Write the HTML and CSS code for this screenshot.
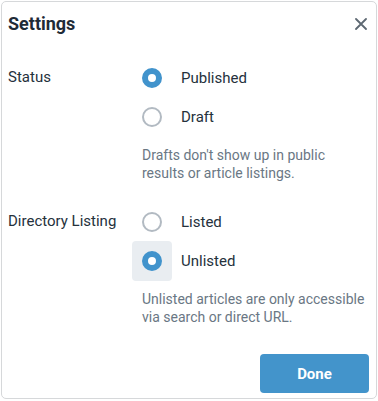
FILE: index.html
```html
<!DOCTYPE html>
<html lang="en">
<head>
  <meta charset="UTF-8" />
  <title>Settings</title>
  <link rel="stylesheet" href="styles.css">
</head>
<body>
  <div class="dialog">
    <div class="header">
      <div class="title">Settings</div>
      <button class="close" aria-label="Close">
        <svg width="12" height="12" viewBox="0 0 12 12">
          <path d="M1 1 L11 11 M11 1 L1 11" stroke="#5d6872" stroke-width="1.8" stroke-linecap="round" fill="none"/>
        </svg>
      </button>
    </div>

    <div class="field">
      <div class="field-label">Status</div>
      <div class="options">
        <label class="option">
          <span class="radio-box"><span class="radio checked"></span></span>
          <span class="option-text">Published</span>
        </label>
        <label class="option">
          <span class="radio-box"><span class="radio"></span></span>
          <span class="option-text">Draft</span>
        </label>
        <p class="help">Drafts don't show up in public results or article listings.</p>
      </div>
    </div>

    <div class="field">
      <div class="field-label">Directory Listing</div>
      <div class="options">
        <label class="option">
          <span class="radio-box"><span class="radio"></span></span>
          <span class="option-text">Listed</span>
        </label>
        <label class="option">
          <span class="radio-box focused"><span class="radio checked"></span></span>
          <span class="option-text">Unlisted</span>
        </label>
        <p class="help">Unlisted articles are only accessible via search or direct URL.</p>
      </div>
    </div>

    <div class="footer">
      <button class="done-btn">Done</button>
    </div>
  </div>
</body>
</html>
```

FILE: styles.css
```css
* {
  box-sizing: border-box;
}

body {
  margin: 0;
  padding: 1px;
  font-family: Roboto, 'Liberation Sans', sans-serif;
  background: #ffffff;
}

.dialog {
  width: 376px;
  height: 398px;
  border: 1px solid #d6d8da;
  border-radius: 5px;
  padding: 0 7px 0 6px;
  background: #fff;
}

.header {
  display: flex;
  justify-content: space-between;
  align-items: center;
  height: 42px;
}

.title {
  font-size: 18px;
  font-weight: 700;
  color: #1f2b37;
}

.close {
  border: none;
  background: none;
  padding: 0;
  margin-right: 2px;
  margin-top: 2px;
  width: 12px;
  height: 12px;
  cursor: pointer;
  display: flex;
}

.field {
  display: flex;
  margin-top: 14px;
}

.field + .field {
  margin-top: 20px;
}

.field-label {
  width: 124px;
  font-size: 15px;
  color: #25313c;
  line-height: 39px;
}

.options {
  flex: 1;
}

.option {
  display: flex;
  align-items: center;
  height: 39px;
  cursor: pointer;
}

.radio-box {
  width: 40px;
  height: 40px;
  display: flex;
  align-items: center;
  justify-content: center;
  border-radius: 4px;
}

.radio-box.focused {
  background: #e9edf1;
}

.radio {
  width: 20px;
  height: 20px;
  border-radius: 50%;
  border: 2px solid #b2bac2;
  background: #fff;
}

.radio.checked {
  border: 6px solid #4193cc;
}

.option-text {
  margin-left: 9px;
  font-size: 15px;
  color: #25313c;
}

.help {
  margin: 10px 0 0 10px;
  font-size: 14px;
  line-height: 18px;
  color: #6a7784;
}

.footer {
  display: flex;
  justify-content: flex-end;
  margin-top: 28px;
}

.done-btn {
  width: 109px;
  height: 39px;
  border: none;
  border-radius: 4px;
  background: #4394cb;
  color: #fff;
  font-family: Roboto, 'Liberation Sans', sans-serif;
  font-size: 15px;
  font-weight: 700;
  cursor: pointer;
}
```
